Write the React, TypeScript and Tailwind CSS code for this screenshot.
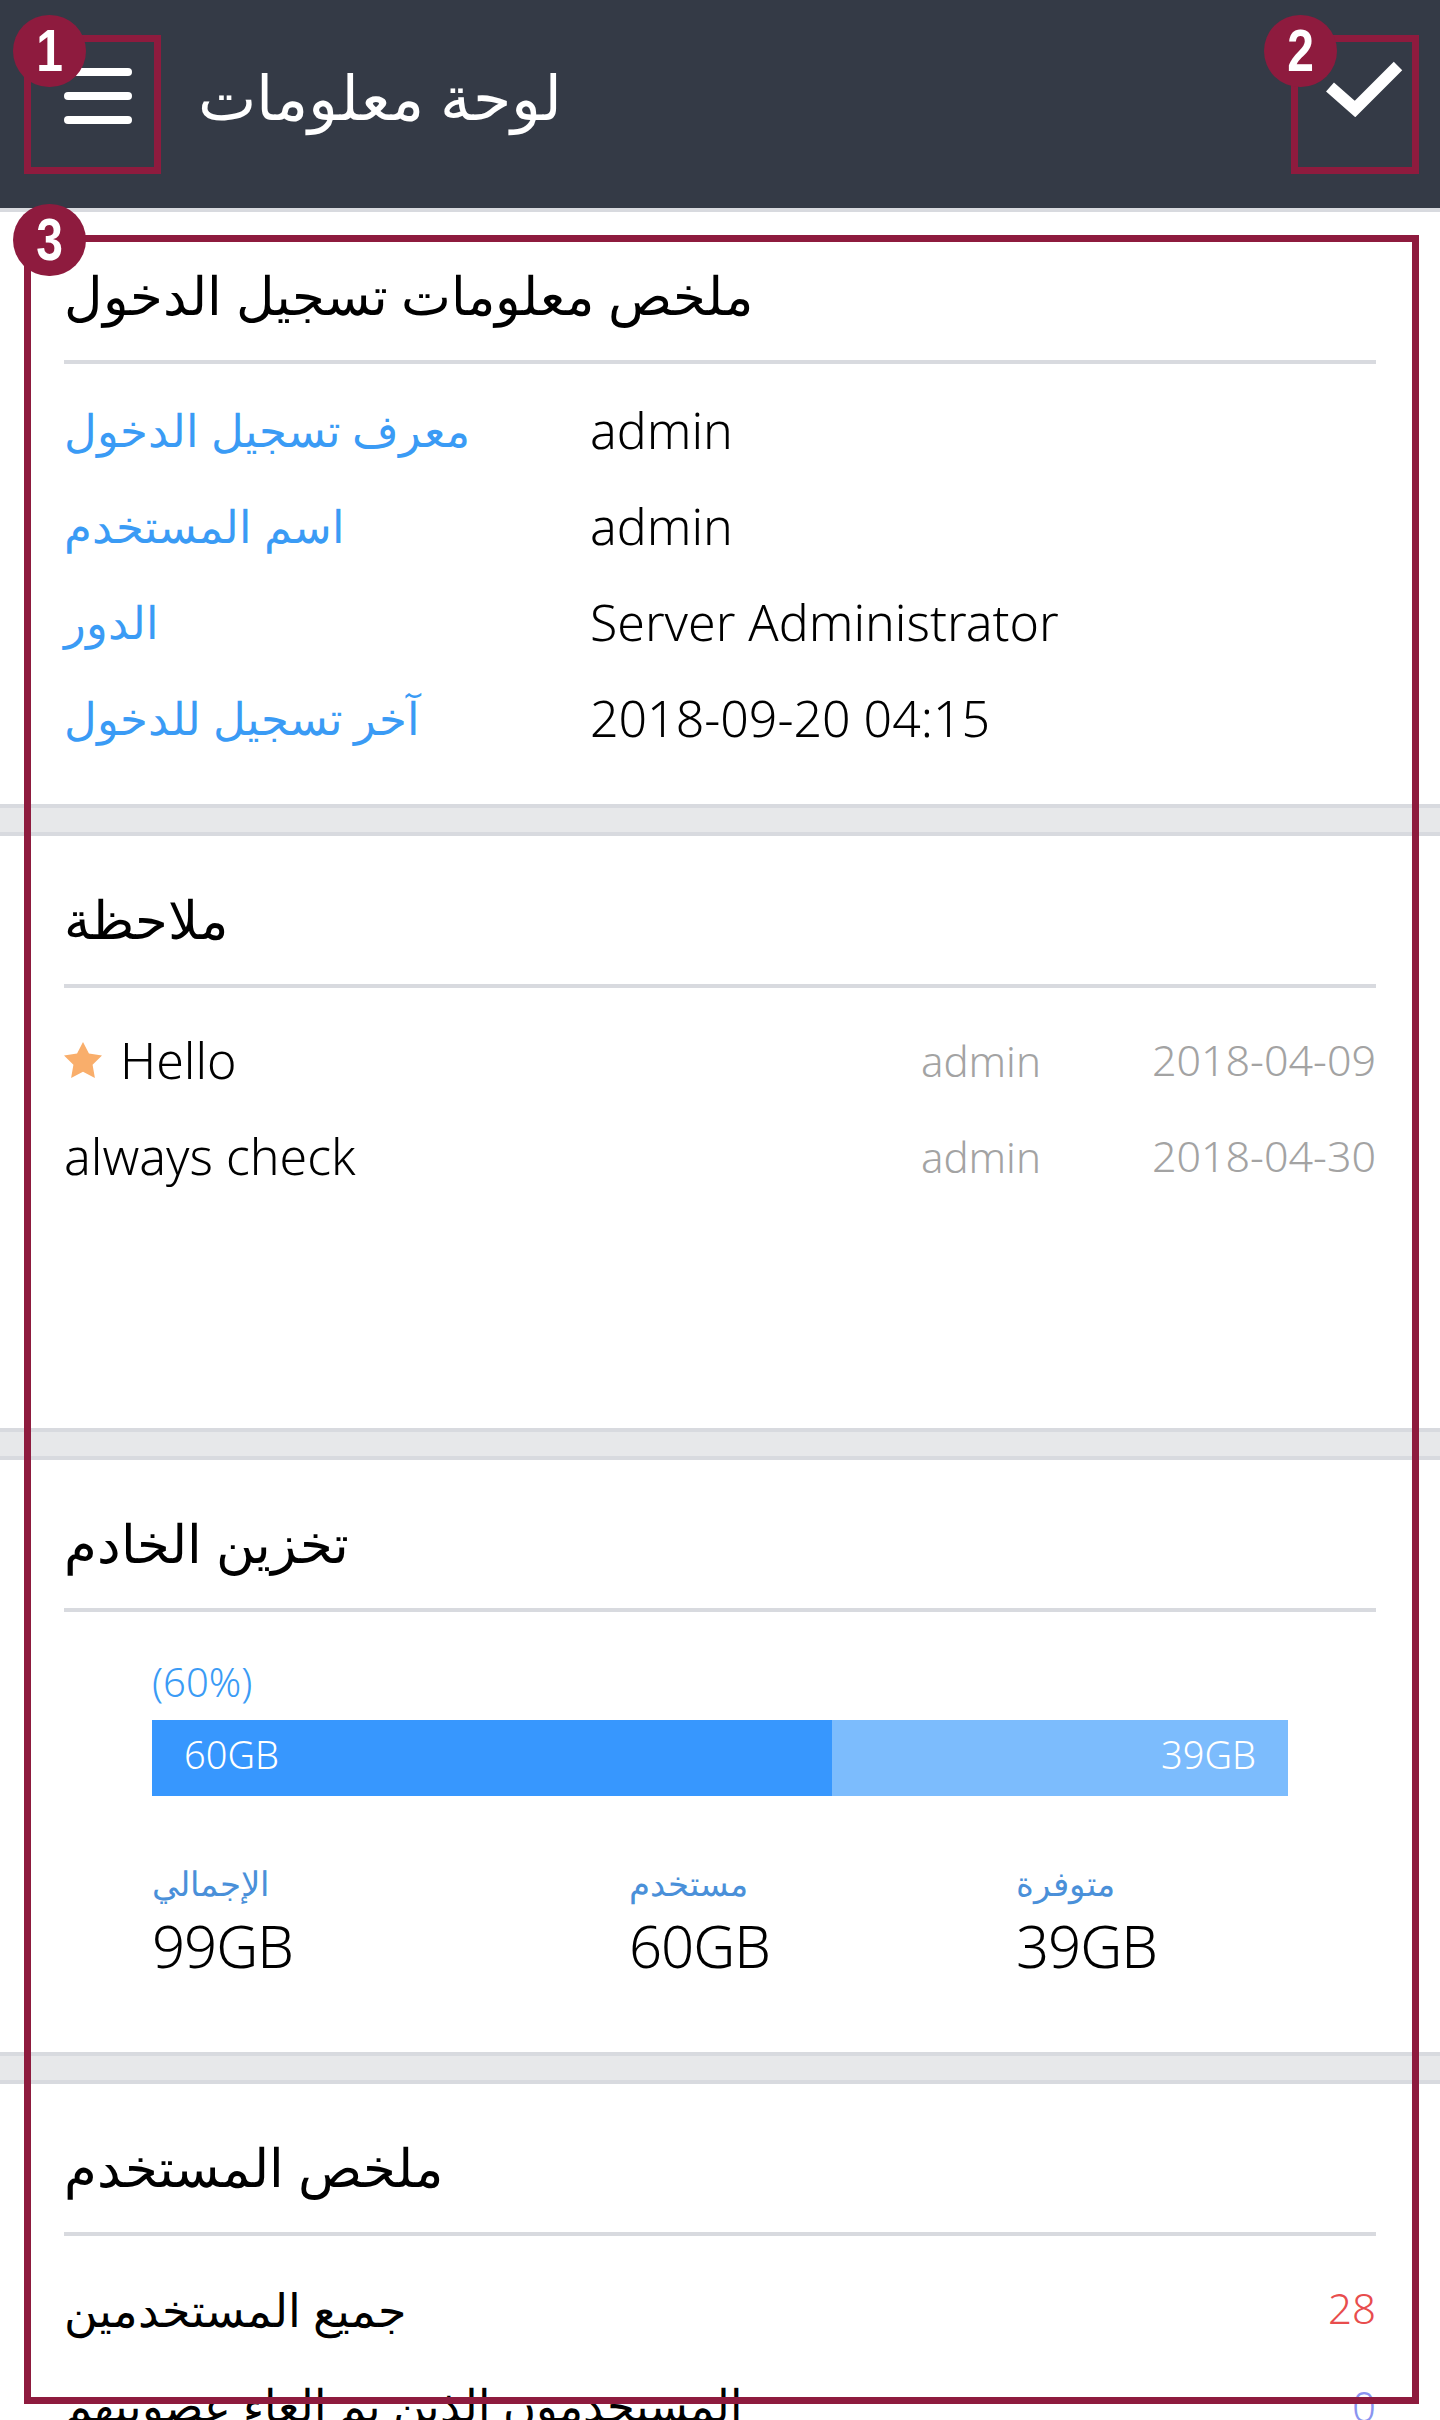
const loginRows = [
  { label: 'معرف تسجيل الدخول', value: 'admin' },
  { label: 'اسم المستخدم', value: 'admin' },
  { label: 'الدور', value: 'Server Administrator' },
  { label: 'آخر تسجيل للدخول', value: '2018-09-20 04:15' },
];

const notes = [
  { text: 'Hello', starred: true, author: 'admin', date: '2018-04-09' },
  { text: 'always check', starred: false, author: 'admin', date: '2018-04-30' },
];

const storageStats = [
  { label: 'الإجمالي', value: '99GB', width: 'w-[477px]' },
  { label: 'مستخدم', value: '60GB', width: 'w-[387px]' },
  { label: 'متوفرة', value: '39GB', width: 'w-[272px]' },
];

function Heading({ title }: { title: string }) {
  return (
    <div className="h-[152px] flex items-center border-b-4 border-[#d8dadf] pt-[18px]">
      <h2 className="text-[52.5px] leading-none font-normal text-black">{title}</h2>
    </div>
  );
}

function Divider() {
  return <div className="h-8 bg-[#e7e8ea] border-y-4 border-[#d8dadf]" />;
}

function Badge({ n, className }: { n: number; className: string }) {
  return (
    <div
      className={`absolute w-[73px] h-[72px] rounded-full bg-[#8e1b3e] flex items-center justify-center text-white font-bold text-[60px] leading-none font-['Liberation_Sans',sans-serif] ${className}`}
    >
      <span className="inline-block scale-x-[0.8]">{n}</span>
    </div>
  );
}

export default function App() {
  return (
    <div className="relative w-[1440px] h-[2420px] overflow-hidden bg-white font-['Noto_Sans',sans-serif] font-light text-black">
      {/* header */}
      <header className="h-[212px] bg-[#343a46] border-b-4 border-[#d8dadf] flex items-center pl-16 pr-[37px] pb-4">
        <div className="flex flex-col gap-4 w-[68px] mr-[66px]">
          <span className="h-2 rounded-full bg-white" />
          <span className="h-2 rounded-full bg-white" />
          <span className="h-2 rounded-full bg-white" />
        </div>
        <h1 className="text-[62px] leading-none font-normal text-white flex-1">لوحة معلومات</h1>
        <svg viewBox="0 0 78 57" className="w-[78px] h-[57px] mb-4 fill-none stroke-white stroke-[12]">
          <polyline points="5,27 30,49 73,6" />
        </svg>
      </header>

      <main>
        <section className="h-[592px] px-16">
          <Heading title="ملخص معلومات تسجيل الدخول" />
          <div className="pt-[18px]">
            {loginRows.map((row) => (
              <div key={row.label} className="h-24 flex items-center">
                <span className="w-[526px] text-[#3a9bf5] text-[45px] font-normal">{row.label}</span>
                <span className="text-[50px]">{row.value}</span>
              </div>
            ))}
          </div>
        </section>
        <Divider />

        <section className="h-[592px] px-16">
          <Heading title="ملاحظة" />
          <div className="pt-6">
            {notes.map((note) => (
              <div key={note.text} className="h-24 flex items-center">
                {note.starred && (
                  <svg viewBox="0.5 1 23 21.8" className="w-[38px] h-[38px] mr-[18px] fill-[#f9ae6b]">
                    <path d="M12 1l3.6 7 7.9 1.2-5.7 5.6 1.4 8L12 19l-7.2 3.8 1.4-8L.5 9.2 8.4 8z" />
                  </svg>
                )}
                <span className="flex-1 text-[50px]">{note.text}</span>
                <span className="w-[231px] text-[42px] text-[#a3a3a3]">{note.author}</span>
                <span className="text-[43px] text-[#a3a3a3]">{note.date}</span>
              </div>
            ))}
          </div>
        </section>
        <Divider />

        <section className="h-[592px] px-16">
          <Heading title="تخزين الخادم" />
          <div className="px-[88px]">
            <p className="h-[108px] pt-12 text-[#3a9bf5] text-[40px] leading-[44px]">(60%)</p>
            <div className="flex h-[76px] text-white text-[38px] leading-[68px]">
              <div className="w-[680px] bg-[#3797fe] pl-8">60GB</div>
              <div className="flex-1 bg-[#7cbcfd] pr-8 text-right">39GB</div>
            </div>
            <div className="flex mt-[63px]">
              {storageStats.map((stat) => (
                <div key={stat.value} className={stat.width}>
                  <p className="text-[34px] leading-[48px] font-normal text-[#4a90d9]">{stat.label}</p>
                  <p className="text-[58px] leading-[78px] tracking-[-1px]">{stat.value}</p>
                </div>
              ))}
            </div>
          </div>
        </section>
        <Divider />

        <section className="px-16">
          <Heading title="ملخص المستخدم" />
          <div className="pt-[25px]">
            <div className="h-24 flex items-center justify-between">
              <span className="text-[46px] font-normal">جميع المستخدمين</span>
              <span className="text-[42px] text-[#e84d4d] -translate-y-0.5">28</span>
            </div>
            <div className="h-24 flex items-center justify-between">
              <span className="text-[45px] font-normal">المستخدمون الذين تم إلغاء عضويتهم</span>
              <span className="text-[42px] text-[#8a94f0]">0</span>
            </div>
          </div>
        </section>
      </main>

      {/* annotation overlay */}
      <div className="absolute left-6 top-[35px] w-[137px] h-[139px] border-[7px] border-[#8e1b3e]" />
      <div className="absolute left-[1291px] top-[35px] w-[128px] h-[139px] border-[7px] border-[#8e1b3e]" />
      <div className="absolute left-6 top-[235px] w-[1395px] h-[2169px] border-[7px] border-[#8e1b3e]" />
      <Badge n={1} className="left-[13px] top-[15px]" />
      <Badge n={2} className="left-[1264px] top-[15px]" />
      <Badge n={3} className="left-[13px] top-[204px]" />
    </div>
  );
}
